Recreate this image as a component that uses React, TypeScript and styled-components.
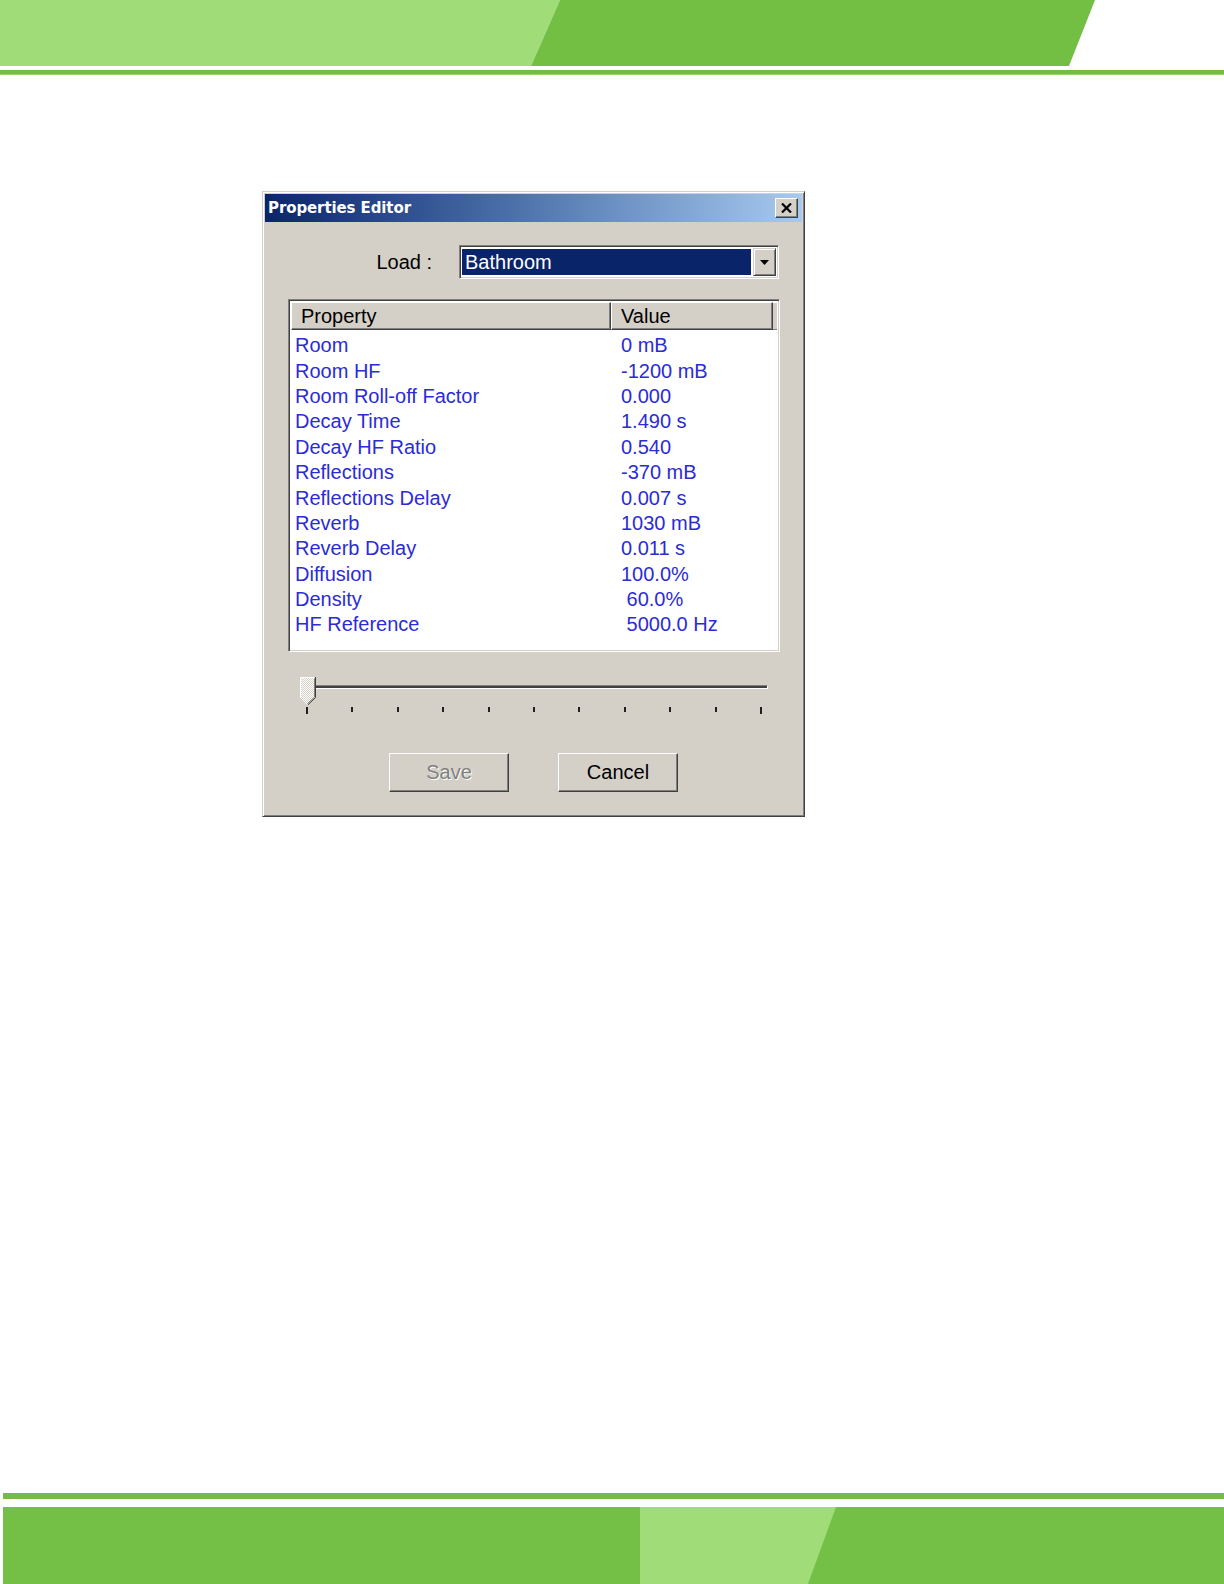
import React from "react";
import styled, { createGlobalStyle } from "styled-components";

const GlobalStyle = createGlobalStyle`
  html, body { margin: 0; padding: 0; background: #ffffff; }
  body { font-family: "Liberation Sans", Arial, sans-serif; }
  * { box-sizing: border-box; }
`;

const Page = styled.div`
  width: 1224px;
  min-height: 1584px;
  display: flex;
  flex-direction: column;
  background: #ffffff;
`;

const HeaderBand = styled.div`
  height: 66px;
  line-height: 0;
  svg { display: block; }
`;

const HeaderRule = styled.div`
  margin-top: 4px;
  height: 5px;
  background: #72bd46;
  border-bottom: 1px solid #98d46e;
`;

const Main = styled.main`
  flex: 1;
  padding: 116px 0 0 262px;
`;

const Footer = styled.footer`
  margin-top: auto;
  padding-left: 3px;
`;

const FooterRule = styled.div`
  height: 6px;
  background: #75bb4b;
`;

const FooterBand = styled.div`
  margin-top: 8px;
  height: 77px;
  line-height: 0;
  svg { display: block; }
`;

const Dialog = styled.section`
  width: 543px;
  background: #d4d0c8;
  border: 1px solid;
  border-color: #d4d0c8 #404040 #404040 #d4d0c8;
  box-shadow: inset 1px 1px #ffffff, inset -1px -1px #808080;
  padding: 2px;
`;

const TitleBar = styled.div`
  height: 28px;
  display: flex;
  align-items: center;
  justify-content: space-between;
  padding: 0 4px 0 3px;
  background: linear-gradient(to right, #0a246a 0%, #4a6fa8 45%, #a6caf0 100%);
`;

const TitleText = styled.span`
  font-family: "DejaVu Sans", Verdana, sans-serif;
  font-weight: bold;
  font-size: 15px;
  color: #ffffff;
  letter-spacing: -0.1px;
`;

const CloseButton = styled.button`
  width: 23px;
  height: 20px;
  padding: 0;
  display: flex;
  align-items: center;
  justify-content: center;
  background: #d4d0c8;
  border: 1px solid;
  border-color: #ffffff #404040 #404040 #ffffff;
  box-shadow: inset -1px -1px #808080;
`;

const Body = styled.div`
  padding: 23px 22px 22px 23px;
  display: flex;
  flex-direction: column;
`;

const LoadRow = styled.div`
  display: grid;
  grid-template-columns: 194px 320px;
  align-items: center;
  margin-left: -23px;
`;

const LoadLabel = styled.label`
  font-size: 20px;
  color: #000000;
  text-align: right;
  padding-right: 27px;
`;

const Combo = styled.div`
  height: 34px;
  display: flex;
  align-items: stretch;
  border: 1px solid;
  border-color: #808080 #ffffff #ffffff #808080;
  box-shadow: inset 1px 1px #404040, inset -1px -1px #d4d0c8;
  padding: 2px;
  background: #ffffff;
`;

const ComboField = styled.div`
  flex: 1;
  margin: 1px 2px 1px 0;
  background: #0a246a;
  color: #ffffff;
  font-size: 20px;
  display: flex;
  align-items: center;
  padding-left: 3px;
`;

const ComboButton = styled.div`
  width: 23px;
  display: flex;
  align-items: center;
  justify-content: center;
  background: #d4d0c8;
  border: 1px solid;
  border-color: #d4d0c8 #404040 #404040 #d4d0c8;
  box-shadow: inset 1px 1px #ffffff, inset -1px -1px #808080;
`;

const ListBox = styled.div`
  margin-top: 20px;
  width: 492px;
  height: 353px;
  background: #ffffff;
  border: 1px solid;
  border-color: #808080 #ffffff #ffffff #808080;
  box-shadow: inset 1px 1px #404040, inset -1px -1px #d4d0c8;
  padding: 2px;
  display: flex;
  flex-direction: column;
`;

const HeaderRow = styled.div`
  display: grid;
  grid-template-columns: 320px 162px 1fr;
  height: 28px;
  background: #d4d0c8;
`;

const HeaderCell = styled.div`
  display: flex;
  align-items: center;
  padding-left: 9px;
  font-size: 20px;
  color: #000000;
  border: 1px solid;
  border-color: #ffffff #404040 #404040 #ffffff;
  box-shadow: inset -1px -1px #808080;
`;

const HeaderFiller = styled.div`
  background: #d4d0c8;
  border-top: 1px solid #ffffff;
  border-bottom: 1px solid #808080;
`;

const Rows = styled.div`
  padding-top: 3px;
  display: flex;
  flex-direction: column;
`;

const Row = styled.div`
  display: grid;
  grid-template-columns: 320px 1fr;
  height: 25.4px;
  align-items: center;
  font-size: 20px;
  color: #2b2bd8;
  white-space: pre;
`;

const NameCell = styled.span`
  padding-left: 4px;
`;

const ValueCell = styled.span`
  padding-left: 10px;
`;

const Slider = styled.div`
  margin: 25px 0 0 12px;
  width: 468px;
  display: flex;
  flex-direction: column;
`;

const TrackArea = styled.div`
  position: relative;
  height: 27px;
`;

const Track = styled.div`
  position: absolute;
  left: 6px;
  right: 0;
  top: 8px;
  height: 4px;
  border-top: 1px solid #808080;
  border-left: 1px solid #808080;
  border-bottom: 1px solid #ffffff;
  border-right: 1px solid #ffffff;
  background: #404040;
  box-shadow: 0 1px #d4d0c8;
`;

const Thumb = styled.svg`
  position: absolute;
  left: 0;
  top: 0;
`;

const Ticks = styled.div`
  margin: 3px 0 0 6px;
  width: 456px;
  display: flex;
  justify-content: space-between;
  align-items: flex-start;
`;

const Tick = styled.span<{ $long?: boolean }>`
  width: 2px;
  height: ${(p) => (p.$long ? 7 : 5)}px;
  background: #202020;
`;

const ButtonRow = styled.div`
  margin-top: 39px;
  display: flex;
  justify-content: center;
  gap: 49px;
  padding-right: 1px;
`;

const DialogButton = styled.button<{ $disabled?: boolean }>`
  width: 120px;
  height: 39px;
  padding: 0;
  background: #d4d0c8;
  border: 1px solid;
  border-color: #ffffff #404040 #404040 #ffffff;
  box-shadow: inset -1px -1px #808080;
  font-family: "Liberation Sans", Arial, sans-serif;
  font-size: 20px;
  color: ${(p) => (p.$disabled ? "#808080" : "#000000")};
  text-shadow: ${(p) => (p.$disabled ? "1px 1px #ffffff" : "none")};
`;

const properties: [string, string][] = [
  ["Room", "0 mB"],
  ["Room HF", "-1200 mB"],
  ["Room Roll-off Factor", "0.000"],
  ["Decay Time", "1.490 s"],
  ["Decay HF Ratio", "0.540"],
  ["Reflections", "-370 mB"],
  ["Reflections Delay", "0.007 s"],
  ["Reverb", "1030 mB"],
  ["Reverb Delay", "0.011 s"],
  ["Diffusion", "100.0%"],
  ["Density", " 60.0%"],
  ["HF Reference", " 5000.0 Hz"],
];

export default function App() {
  return (
    <Page>
      <GlobalStyle />
      <HeaderBand>
        <svg width="1224" height="66" viewBox="0 0 1224 66">
          <polygon points="0,0 560,0 531,66 0,66" fill="#a0dc78" />
          <polygon points="560,0 1095,0 1069,66 531,66" fill="#72bf44" />
        </svg>
      </HeaderBand>
      <HeaderRule />
      <Main>
        <Dialog>
          <TitleBar>
            <TitleText>Properties Editor</TitleText>
            <CloseButton aria-label="Close">
              <svg width="11" height="10" viewBox="0 0 11 10">
                <path d="M1,0.5 L10,9.5 M10,0.5 L1,9.5" stroke="#000" strokeWidth="2.2" />
              </svg>
            </CloseButton>
          </TitleBar>
          <Body>
            <LoadRow>
              <LoadLabel>Load :</LoadLabel>
              <Combo>
                <ComboField>Bathroom</ComboField>
                <ComboButton>
                  <svg width="9" height="5" viewBox="0 0 9 5">
                    <polygon points="0,0 9,0 4.5,5" fill="#000" />
                  </svg>
                </ComboButton>
              </Combo>
            </LoadRow>
            <ListBox>
              <HeaderRow>
                <HeaderCell>Property</HeaderCell>
                <HeaderCell>Value</HeaderCell>
                <HeaderFiller />
              </HeaderRow>
              <Rows>
                {properties.map(([name, value]) => (
                  <Row key={name}>
                    <NameCell>{name}</NameCell>
                    <ValueCell>{value}</ValueCell>
                  </Row>
                ))}
              </Rows>
            </ListBox>
            <Slider>
              <TrackArea>
                <Track />
                <Thumb width="16" height="28" viewBox="0 0 16 28">
                  <defs>
                    <pattern id="dith" width="2" height="2" patternUnits="userSpaceOnUse">
                      <rect width="2" height="2" fill="#d4d0c8" />
                      <rect width="1" height="1" fill="#ffffff" />
                      <rect x="1" y="1" width="1" height="1" fill="#ffffff" />
                    </pattern>
                  </defs>
                  <polygon points="1,1 14,1 14,20 7.5,26.5 1,20" fill="url(#dith)" />
                  <path d="M0.5,20.5 V0.5 H14.5" stroke="#ffffff" fill="none" />
                  <path d="M0.5,20.5 L7.5,27.5" stroke="#ffffff" fill="none" />
                  <path d="M15.5,0 V20.5 L8,27.8" stroke="#404040" fill="none" />
                  <path d="M14.5,1.5 V20 L7.5,26.6" stroke="#808080" fill="none" />
                </Thumb>
              </TrackArea>
              <Ticks>
                {Array.from({ length: 11 }, (_, i) => (
                  <Tick key={i} $long={i === 0 || i === 10} />
                ))}
              </Ticks>
            </Slider>
            <ButtonRow>
              <DialogButton $disabled>Save</DialogButton>
              <DialogButton>Cancel</DialogButton>
            </ButtonRow>
          </Body>
        </Dialog>
      </Main>
      <Footer>
        <FooterRule />
        <FooterBand>
          <svg width="1221" height="77" viewBox="0 0 1221 77">
            <rect width="1221" height="77" fill="#74bf45" />
            <polygon points="637,0 833,0 805,77 637,77" fill="#a0dc78" />
          </svg>
        </FooterBand>
      </Footer>
    </Page>
  );
}
